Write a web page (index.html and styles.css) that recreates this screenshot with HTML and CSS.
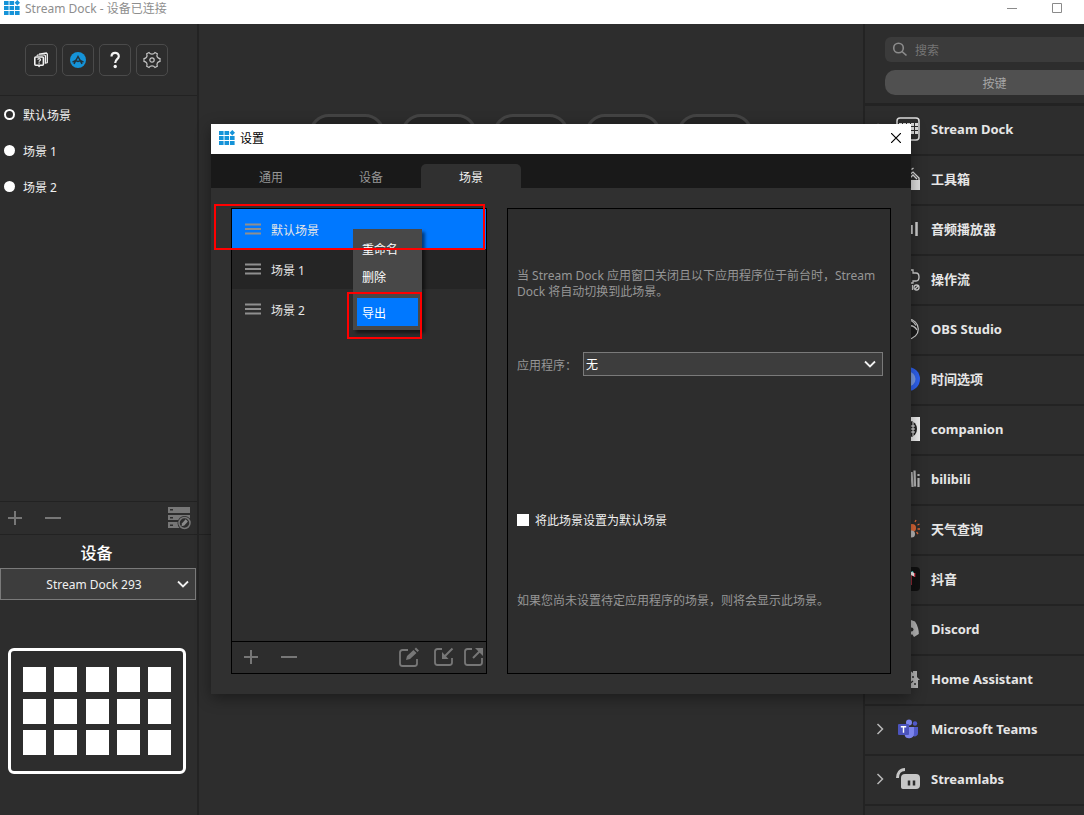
FILE: index.html
```html
<!DOCTYPE html>
<html lang="zh-CN">
<head>
    <meta charset="UTF-8">
    <meta name="viewport" content="width=device-width, initial-scale=1.0">
    <title>Stream Dock</title>
    <link rel="stylesheet" href="styles.css">
</head>
<body>
    <!-- Shared icons -->
    <svg width="0" height="0" class="sprite" aria-hidden="true">
        <symbol id="logo" viewBox="0 0 16 16">
            <path fill="#1593d8" d="M0 1h4.600v4H0zM5.500 1h4.600v4H5.500zM0 6h4.600v4H0zM5.500 6h4.600v4H5.500zM11 6h4.600v4H11zM0 11h4.600v4H0zM5.500 11h4.600v4H5.500zM11 11h4.600v4H11zM13.300 0L16 2.700l-2.700 2.700-2.700-2.700z"/>
        </symbol>
        <symbol id="plus" viewBox="0 0 16 16">
            <path d="M8 1v14M1 8h14" stroke="currentColor" stroke-width="2"/>
        </symbol>
        <symbol id="minus" viewBox="0 0 16 16">
            <path d="M0 8h16" stroke="currentColor" stroke-width="2"/>
        </symbol>
        <symbol id="chevron-down" viewBox="0 0 12 12">
            <path d="M1 3.500l5 5 5-5" fill="none" stroke="#f0f0f0" stroke-width="1.800"/>
        </symbol>
        <symbol id="chevron-right" viewBox="0 0 12 12">
            <path d="M3.500 1l5 5-5 5" fill="none" stroke="#b8b8b8" stroke-width="1.500"/>
        </symbol>
        <symbol id="grip" viewBox="0 0 16 12">
            <path d="M0 1.500h16M0 6h16M0 10.500h16" stroke="#8f8f8f" stroke-width="2"/>
        </symbol>
    </svg>

    <div class="app">
        <header class="titlebar">
            <svg class="logo"><use href="#logo"/></svg>
            <span class="titlebar-text">Stream Dock - 设备已连接</span>
            <button class="win-btn" aria-label="最小化"><svg width="10" height="10"><path d="M0 5.500h10" stroke="#8a8a8a"/></svg></button>
            <button class="win-btn" aria-label="最大化"><svg width="10" height="10"><path d="M.5.500h9v9h-9z" fill="none" stroke="#8a8a8a"/></svg></button>
        </header>

        <div class="main">
            <aside class="sidebar">
                <div class="toolbar">
                    <button aria-label="教程">
                        <svg width="16" height="16" viewBox="0 0 16 16" fill="none" stroke="#f2f2f2">
                            <path d="M6 2.200L13.300 1l1 1v8.500l-1 .8" stroke-width="1.300"/>
                            <path d="M3.800 4l.8-1h7l.8.8v8" stroke-width="1.200"/>
                            <rect x="1.800" y="5" width="8.600" height="8.200" rx="1" stroke-width="1.600" fill="#2d2d2d"/>
                            <path d="M4.800 7.800c0-1.500 2.700-1.500 2.700 0 0 .9-1.400.9-1.400 1.900M6.100 10.500v1.200" stroke-width="1.200"/>
                            <path d="M4.800 14h2.600l-1.300 1.600z" fill="#f2f2f2" stroke="none"/>
                        </svg>
                    </button>
                    <button aria-label="商店">
                        <svg width="16" height="16" viewBox="0 0 16 16">
                            <circle cx="8" cy="8" r="8" fill="#1593d8"/>
                            <path d="M4 12l4-7.500 4 7.500M2.500 10.200l3-1.700 2.500 1 2.500-1 3 1.700" fill="none" stroke="#23323b" stroke-width="1.500"/>
                        </svg>
                    </button>
                    <button aria-label="帮助">
                        <svg width="12" height="18" viewBox="0 0 12 18">
                            <path d="M2.500 5.500C2.500 .8 9.800.8 9.800 5.200c0 3-3.600 3-3.600 6.800" fill="none" stroke="#f4f4f4" stroke-width="2.200"/>
                            <circle cx="6.200" cy="15.500" r="1.700" fill="#f4f4f4"/>
                        </svg>
                    </button>
                    <button aria-label="设置">
                        <svg width="18" height="18" viewBox="0 0 18 18" fill="none" stroke="#c4c4c4" stroke-width="1.200">
                            <path d="M6 1.500q1 1.700 3 1.700t3-1.700l2.300 1.300q-.8 2 .1 3.300t2.600 1.500v2.800q-1.800.2-2.600 1.500t-.1 3.300L12 16.500q-1-1.700-3-1.700t-3 1.700l-2.300-1.300q.8-2-.1-3.300T1 10.400V7.600q1.800-.2 2.600-1.500t.1-3.300z"/>
                            <circle cx="9" cy="9" r="2.200"/>
                        </svg>
                    </button>
                </div>

                <div class="scene-radios">
                    <label><input type="radio" name="scene" checked><span>默认场景</span></label>
                    <label><input type="radio" name="scene"><span>场景 1</span></label>
                    <label><input type="radio" name="scene"><span>场景 2</span></label>
                </div>

                <div class="scene-actions">
                    <button aria-label="添加场景"><svg width="16" height="16"><use href="#plus"/></svg></button>
                    <button aria-label="删除场景"><svg width="16" height="16"><use href="#minus"/></svg></button>
                    <button class="push" aria-label="管理场景">
                        <svg width="24" height="24" viewBox="0 0 24 24">
                            <path fill="#777" d="M1 1h22v6H1zM1 9h22v5H1zM1 16h13v6H1z"/>
                            <path fill="#2d2d2d" d="M3 3h3v1.500H3zM3 11h3v1.500H3zM3 18.500h3V20H3z"/>
                            <circle cx="17.500" cy="17" r="7" fill="#2d2d2d"/>
                            <circle cx="17.500" cy="17" r="5.500" fill="none" stroke="#777" stroke-width="1.500"/>
                            <path d="M14.500 20.200l.6-3 3.600-3.900 2.200 2.200-3.600 3.900z" fill="#8a8a8a"/>
                        </svg>
                    </button>
                </div>

                <section class="device">
                    <h2>设备</h2>
                    <div class="select-box">
                        <select class="device-select" aria-label="设备">
                            <option>Stream Dock 293</option>
                        </select>
                        <svg><use href="#chevron-down"/></svg>
                    </div>
                    <div class="device-preview">
                        <i></i><i></i><i></i><i></i><i></i>
                        <i></i><i></i><i></i><i></i><i></i>
                        <i></i><i></i><i></i><i></i><i></i>
                    </div>
                </section>
            </aside>

            <main class="canvas">
                <div class="keys">
                    <span></span><span></span><span></span><span></span><span></span>
                    <span></span><span></span><span></span><span></span><span></span>
                    <span></span><span></span><span></span><span></span><span></span>
                </div>
                <div class="inspector"></div>
            </main>

            <aside class="plugins">
                <div class="plugins-head">
                    <label class="search">
                        <svg width="16" height="16" viewBox="0 0 16 16" fill="none" stroke="#8c8c8c" stroke-width="1.600">
                            <circle cx="6.500" cy="6" r="4.800"/>
                            <path d="M10 9.500l4.500 4"/>
                        </svg>
                        <input type="text" placeholder="搜索" aria-label="搜索">
                    </label>
                    <button class="key-type">按键</button>
                </div>
                <ul class="plugin-list">
                    <li>
                        <svg class="chev"><use href="#chevron-right"/></svg>
                        <svg class="icon" viewBox="0 0 24 24"><rect x="1" y="1" width="22" height="22" rx="3" fill="none" stroke="#dedede" stroke-width="1.500"/><path fill="#dedede" d="M3 6h3v3H3zM7 6h3v3H7zM11 6h3v3h-3zM15 6h3v3h-3zM19 6h3v3h-3zM3 10h3v3H3zM7 10h3v3H7zM11 10h3v3h-3zM15 10h3v3h-3zM19 10h3v3h-3zM3 14h3v3H3zM7 14h3v3H7zM11 14h3v3h-3zM15 14h3v3h-3zM19 14h3v3h-3z"/></svg>
                        Stream Dock
                    </li>
                    <li>
                        <svg class="chev"><use href="#chevron-right"/></svg>
                        <svg class="icon" viewBox="0 0 24 24"><path d="M0 13h24v10H0z" fill="#dedede"/><path d="M8 12l9-7 6 6v2M13 12l4-4 4 4M15.500 2.500l2-1.500" fill="none" stroke="#dedede" stroke-width="1.300"/></svg>
                        工具箱
                    </li>
                    <li>
                        <svg class="chev"><use href="#chevron-right"/></svg>
                        <svg class="icon" viewBox="0 0 24 24"><path d="M3 9v6M8 5v14M15.500 8v9M20.500 5v14" stroke="#cfcfcf" stroke-width="2.500"/></svg>
                        音频播放器
                    </li>
                    <li>
                        <svg class="chev"><use href="#chevron-right"/></svg>
                        <svg class="icon" viewBox="0 0 24 24" fill="none" stroke="#cfcfcf" stroke-width="1.300"><path d="M3 3h14v3h3q3 0 3 4t-3 4h-3v2h-3M16.500 18v5"/><circle cx="20.500" cy="20.500" r="2.500"/><path d="M19 22l3-3"/></svg>
                        操作流
                    </li>
                    <li>
                        <svg class="chev"><use href="#chevron-right"/></svg>
                        <svg class="icon" viewBox="0 0 24 24"><circle cx="12.500" cy="12" r="9.800" fill="#1c1c1c" stroke="#cfcfcf" stroke-width="1.200"/><path d="M10 10c4-2 8-2 11 3M15 3.500c2 1 4 3 5 5" fill="none" stroke="#cfcfcf" stroke-width="1.300"/></svg>
                        OBS Studio
                    </li>
                    <li>
                        <svg class="chev"><use href="#chevron-right"/></svg>
                        <svg class="icon" viewBox="0 0 24 24"><circle cx="12" cy="12" r="12" fill="#2f62f0"/><circle cx="12" cy="12" r="7.500" fill="#7b9de8"/></svg>
                        时间选项
                    </li>
                    <li>
                        <svg class="chev"><use href="#chevron-right"/></svg>
                        <svg class="icon" viewBox="0 0 24 24"><path fill="#f0f0f0" d="M0 0h24v24H0z"/><ellipse cx="14" cy="12" rx="7" ry="8" fill="#222"/><path d="M7 9h12M7 12h12M7 15h12M12 5v14M17 5v14" stroke="#f0f0f0"/></svg>
                        companion
                    </li>
                    <li>
                        <svg class="chev"><use href="#chevron-right"/></svg>
                        <svg class="icon" viewBox="0 0 24 24"><path d="M4 4v16M9 9v11M15.500 5l1 15M18.500 3.500l.5 16M22.500 11v9M22.500 7v2" stroke="#b5b5b5" stroke-width="2.200"/></svg>
                        bilibili
                    </li>
                    <li>
                        <svg class="chev"><use href="#chevron-right"/></svg>
                        <svg class="icon" viewBox="0 0 24 24"><circle cx="16" cy="11" r="4" fill="#df6837"/><path d="M19 5l1-2M21.500 8l2-1M21.500 12h2.500M20.500 15l1.500 2" stroke="#df6837" stroke-width="1.300"/><circle cx="15.500" cy="17" r="3.500" fill="#bdbdbd"/></svg>
                        天气查询
                    </li>
                    <li>
                        <svg class="chev"><use href="#chevron-right"/></svg>
                        <svg class="icon" viewBox="0 0 24 24"><rect width="24" height="24" rx="4" fill="#101010"/><path d="M15 8v10" stroke="#e8394d" stroke-width="1.200"/><path d="M15 5h2l2 2v3l-4-2z" fill="#f7f7f7"/><path d="M15.500 4.700h1.700" stroke="#4be3e0"/><path d="M18.700 6v4" stroke="#e8394d" stroke-width="1.200"/></svg>
                        抖音
                    </li>
                    <li>
                        <svg class="chev"><use href="#chevron-right"/></svg>
                        <svg class="icon" viewBox="0 0 24 24"><path d="M6 4l3-1 1 2h4l1-2 4 1.500c3 4.500 4 9 3.800 12.500L18 20l-1.500-2.500h-9L6 20l-4.500-3C1 12 3 7 6 4z" fill="#b5b5b5"/><circle cx="15.500" cy="12.500" r="2" fill="#2d2d2d"/><circle cx="8.500" cy="12.500" r="2" fill="#2d2d2d"/></svg>
                        Discord
                    </li>
                    <li>
                        <svg class="chev"><use href="#chevron-right"/></svg>
                        <svg class="icon" viewBox="0 0 24 24"><path d="M1 13L12 2l5 4V4h4v6l3 3h-2v8H3v-8z" fill="#b5b5b5"/><path d="M12 21v-8M12 18l5-4M16 10h2M18 17h2" stroke="#2d2d2d" stroke-width="1.300"/></svg>
                        Home Assistant
                    </li>
                    <li>
                        <svg class="chev"><use href="#chevron-right"/></svg>
                        <svg class="icon" viewBox="0 0 24 24"><circle cx="19" cy="6.500" r="2.200" fill="#5059c9"/><path d="M15 10h7v6c0 3-3 4-5 3z" fill="#5059c9"/><circle cx="13" cy="5.500" r="3" fill="#7b83eb"/><path d="M9 10h9v6.500a4.800 4.800 0 0 1-9.500 1z" fill="#7b83eb"/><rect x="2" y="7" width="11" height="11" rx="1" fill="#4b53bc"/><path d="M4.800 9.800h5.400M7.500 9.800v6" stroke="#fff" stroke-width="1.400"/></svg>
                        Microsoft Teams
                    </li>
                    <li>
                        <svg class="chev"><use href="#chevron-right"/></svg>
                        <svg class="icon" viewBox="0 0 24 24"><path d="M1.500 11C1.500 6 4 2.500 9 2.500" fill="none" stroke="#c6c6c6" stroke-width="3"/><rect x="5" y="7" width="19" height="15" rx="4" fill="#c6c6c6"/><path d="M5 12h6v10H7a2 2 0 0 1-2-2z" fill="#c6c6c6"/><path d="M13 13.500v5M18 13.500v5" stroke="#2d2d2d" stroke-width="2.500"/></svg>
                        Streamlabs
                    </li>
                </ul>
            </aside>
        </div>
    </div>

    <!-- Settings window -->
    <div class="dialog" role="dialog" aria-labelledby="dialogTitle">
        <div class="dialog-title">
            <svg class="logo"><use href="#logo"/></svg>
            <span id="dialogTitle">设置</span>
            <button aria-label="关闭"><svg width="10" height="10"><path d="M0 0l10 10M10 0L0 10" stroke="#000" stroke-width="1.200"/></svg></button>
        </div>
        <div class="tabs">
            <button>通用</button>
            <button>设备</button>
            <button class="active">场景</button>
        </div>
        <div class="dialog-body">
            <div class="scene-panel">
                <ul class="scene-list">
                    <li class="selected"><svg class="grip"><use href="#grip"/></svg><span>默认场景</span></li>
                    <li class="alt"><svg class="grip"><use href="#grip"/></svg><span>场景 1</span></li>
                    <li><svg class="grip"><use href="#grip"/></svg><span>场景 2</span></li>
                </ul>
                <div class="scene-tools">
                    <button aria-label="添加"><svg width="16" height="16"><use href="#plus"/></svg></button>
                    <button aria-label="删除"><svg width="16" height="16"><use href="#minus"/></svg></button>
                    <button class="push" aria-label="编辑">
                        <svg width="20" height="20" viewBox="0 0 20 20"><path d="M9 3H3.500Q1 3 1 5.500v11Q1 19 3.500 19h12q2.500 0 2.500-2.500V12" fill="none" stroke="#777" stroke-width="1.800"/><path d="M7 13l1-4 6.500-6 3 3L11 12zM15.500 2l1.500-1.500 3 3L18.500 5z" fill="#777"/></svg>
                    </button>
                    <button class="import" aria-label="导入">
                        <svg width="20" height="20" viewBox="0 0 20 20"><path d="M8 2H3.500Q1 2 1 4.500v11Q1 18 3.500 18h12q2.500 0 2.500-2.500V11" fill="none" stroke="#777" stroke-width="1.800"/><path d="M18.500 1.500L9 11" stroke="#777" stroke-width="2"/><path d="M8 5l6.500 7H8z" fill="#777"/></svg>
                    </button>
                    <button aria-label="导出">
                        <svg width="20" height="20" viewBox="0 0 20 20"><path d="M8 2H3.500Q1 2 1 4.500v11Q1 18 3.500 18h12q2.500 0 2.500-2.500V11" fill="none" stroke="#777" stroke-width="1.800"/><path d="M9 11l8-8" stroke="#777" stroke-width="2"/><path d="M11 1h8v8z" fill="#777"/></svg>
                    </button>
                </div>
            </div>

            <div class="scene-options">
                <p>当 Stream Dock 应用窗口关闭且以下应用程序位于前台时，Stream Dock 将自动切换到此场景。</p>
                <div class="app-row">
                    <label for="appSelect">应用程序：</label>
                    <div class="select-box">
                        <select id="appSelect" class="app-select">
                            <option>无</option>
                        </select>
                        <svg><use href="#chevron-down"/></svg>
                    </div>
                </div>
                <label class="default-row"><input type="checkbox"><span>将此场景设置为默认场景</span></label>
                <p>如果您尚未设置待定应用程序的场景，则将会显示此场景。</p>
            </div>
        </div>

        <div class="context-menu">
            <button>重命名</button>
            <button>删除</button>
            <hr>
            <button class="active">导出</button>
        </div>
        <div class="mark mark-scene"></div>
        <div class="mark mark-export"></div>
    </div>
</body>
</html>
```

FILE: styles.css
```css
* {
    box-sizing: border-box;
    margin: 0;
    padding: 0;
}

body {
    font-family: "Noto Sans", "Noto Sans CJK SC", sans-serif;
    font-size: 12px;
    line-height: 16px;
    color: #f0f0f0;
    background-color: #2d2d2d;
    overflow: hidden;
}

button, input, select {
    font: inherit;
    color: inherit;
}

button {
    background: none;
    border: none;
    cursor: pointer;
}

svg {
    display: block;
    flex-shrink: 0;
}

ul {
    list-style: none;
}

.sprite {
    position: absolute;
}

.logo {
    width: 16px;
    height: 16px;
}

.app {
    height: 100vh;
    display: flex;
    flex-direction: column;
}

/* Window title bar */
.titlebar {
    display: flex;
    align-items: center;
    height: 24px;
    padding: 0 21px 8px 4px;
    background-color: #fff;
    color: #8e8e8e;
}

.titlebar-text {
    flex: 1;
    margin-left: 5px;
    padding-top: 2px;
}

.win-btn {
    margin-left: 33px;
    padding: 1px;
}

.main {
    flex: 1;
    display: flex;
    min-height: 0;
}

/* Left sidebar */
.sidebar {
    width: 199px;
    display: flex;
    flex-direction: column;
    border-right: 2px solid #232323;
}

.toolbar {
    display: flex;
    gap: 5px;
    padding: 20px 25px 19px;
    border-bottom: 1px solid #222;
}

.toolbar button {
    width: 32px;
    height: 32px;
    display: flex;
    align-items: center;
    justify-content: center;
    border: 1px solid #4a4a4a;
    border-radius: 5px;
}

.scene-radios {
    flex: 1;
}

.scene-radios label {
    display: flex;
    align-items: center;
    gap: 8px;
    height: 36px;
    padding-left: 4px;
}

.scene-radios span,
.scene-list span,
.default-row span,
.app-row label {
    padding-top: 3px;
}

.scene-radios input {
    appearance: none;
    width: 11px;
    height: 11px;
    border-radius: 50%;
    background-color: #fff;
}

.scene-radios input:checked {
    border: 2px solid #fff;
    background-color: transparent;
}

.scene-actions {
    display: flex;
    align-items: center;
    gap: 22px;
    height: 33px;
    padding: 0 6px 0 7px;
    border-top: 1px solid #222;
    color: #777;
}

.push {
    margin-left: auto;
}

.device {
    border-top: 1px solid #222;
    padding-bottom: 41px;
}

.device h2 {
    padding: 3px 4px 0 0;
    font-size: 16px;
    font-weight: 500;
    line-height: 30px;
    text-align: center;
    color: #fff;
}

.select-box {
    position: relative;
}

.select-box select {
    display: block;
    appearance: none;
    width: 100%;
    padding-top: 2px;
    background-color: #3d3d3d;
    border: 1px solid #7a7a7a;
    border-radius: 0;
}

.select-box svg {
    position: absolute;
    top: 50%;
    right: 7px;
    width: 12px;
    height: 12px;
    margin-top: -6px;
    pointer-events: none;
}

.device .select-box {
    margin-right: 1px;
}

.select-box .device-select {
    height: 32px;
    padding-right: 8px;
    text-align: center;
    text-align-last: center;
}

.device-preview {
    display: grid;
    grid-template-columns: repeat(5, 23px);
    grid-auto-rows: 25px;
    justify-content: space-between;
    align-content: space-between;
    height: 126px;
    margin: 48px 11px 0 8px;
    padding: 16px 12px;
    border: 3px solid #fff;
    border-radius: 6px;
}

.device-preview i {
    background-color: #fff;
}

/* Key canvas */
.canvas {
    flex: 1;
    min-width: 0;
    display: flex;
    flex-direction: column;
}

.keys {
    flex: 1;
    display: grid;
    grid-template-columns: repeat(5, 76px);
    grid-auto-rows: 76px;
    gap: 16px;
    justify-content: center;
    padding-top: 90px;
}

.keys span {
    border: 3px solid #444;
    border-radius: 20px;
    background-color: #252525;
}

.inspector {
    height: 281px;
    border-top: 1px solid #222;
}

/* Plugin list */
.plugins {
    width: 221px;
    border-left: 2px solid #232323;
    overflow: hidden;
}

.plugins-head {
    padding: 13px 0 8px 20px;
    border-bottom: 3px solid #232323;
}

.search {
    display: flex;
    align-items: center;
    gap: 7px;
    height: 25px;
    margin-right: -20px;
    padding-left: 7px;
    border-radius: 6px;
    background-color: #3b3b3b;
}

.search input {
    flex: 1;
    min-width: 0;
    padding-top: 2px;
    border: none;
    outline: none;
    background: none;
}

.search input::placeholder {
    color: #757575;
    opacity: 1;
}

.key-type {
    display: block;
    width: 219px;
    height: 25px;
    margin-top: 8px;
    padding-top: 2px;
    border-radius: 10px;
    background-color: #505050;
    color: #a6a6a6;
}

.plugin-list li {
    display: flex;
    align-items: center;
    height: 50px;
    padding: 0 0 2px 9px;
    border-bottom: 2px solid #232323;
    font-size: 13px;
    font-weight: bold;
    white-space: nowrap;
    color: #e6e6e6;
}

.plugin-list .chev {
    width: 12px;
    height: 12px;
    margin-right: 10px;
}

.plugin-list .icon {
    width: 24px;
    height: 24px;
    margin-right: 11px;
}

/* Settings dialog */
.dialog {
    position: absolute;
    top: 124px;
    left: 211px;
    width: 700px;
    height: 570px;
    display: flex;
    flex-direction: column;
    background-color: #303030;
    box-shadow: 0 4px 14px rgba(0, 0, 0, 0.4);
}

.dialog-title {
    display: flex;
    align-items: center;
    gap: 5px;
    height: 30px;
    padding: 0 9px 2px 8px;
    background-color: #fff;
    color: #000;
}

.dialog-title span {
    padding-top: 2px;
}

.dialog-title button {
    margin-left: auto;
    padding: 1px;
}

.tabs {
    display: flex;
    align-items: flex-end;
    height: 34px;
    padding-left: 10px;
    background-color: #191919;
}

.tabs button {
    width: 100px;
    height: 24px;
    padding-top: 4px;
    color: #969696;
}

.tabs .active {
    border-radius: 5px 5px 0 0;
    background-color: #303030;
    color: #f0f0f0;
}

.dialog-body {
    flex: 1;
    display: flex;
    gap: 20px;
    padding: 20px;
}

.scene-panel {
    width: 256px;
    display: flex;
    flex-direction: column;
    border: 1px solid #000;
    background-color: #2d2d2d;
}

.scene-list {
    flex: 1;
}

.scene-list li {
    display: flex;
    align-items: center;
    gap: 10px;
    height: 40px;
    padding-left: 13px;
    color: #e6e6e6;
}

.scene-list .alt {
    background-color: #252525;
}

.scene-list .selected {
    background-color: #0078ff;
}

.grip {
    width: 16px;
    height: 12px;
}

.scene-tools {
    display: flex;
    align-items: center;
    height: 32px;
    padding: 0 2px 2px 11px;
    border-top: 1px solid #000;
    color: #777;
}

.scene-tools button + button {
    margin-left: 22px;
}

.scene-tools button.push {
    margin-left: auto;
}

.scene-tools button.import {
    margin-left: 15px;
}

.scene-tools button.import + button {
    margin-left: 10px;
}

.scene-options {
    flex: 1;
    padding: 59px 7px 0 9px;
    border: 1px solid #000;
    background-color: #2d2d2d;
    color: #969696;
}

.app-row {
    display: flex;
    align-items: center;
    gap: 6px;
    margin: 52px 0 134px;
}

.app-row .select-box {
    flex: 1;
}

.select-box .app-select {
    height: 24px;
    padding-left: 2px;
    color: #fff;
}

.default-row {
    display: flex;
    align-items: center;
    gap: 6px;
    margin-bottom: 64px;
    color: #f0f0f0;
}

.default-row input {
    appearance: none;
    width: 12px;
    height: 12px;
    background-color: #fff;
}

.default-row input:checked {
    border: 3px solid #fff;
    background-color: #0078ff;
}

/* Scene context menu */
.context-menu {
    position: absolute;
    top: 105px;
    left: 142px;
    width: 69px;
    padding: 5px 4px 4px;
    background-color: #484848;
    box-shadow: 3px 3px 3px rgba(0, 0, 0, 0.5);
}

.context-menu button {
    display: block;
    width: 61px;
    height: 28px;
    padding: 3px 0 0 5px;
    text-align: left;
    color: #fff;
}

.context-menu .active {
    background-color: #0078ff;
}

.context-menu hr {
    margin: 2px 0 5px;
    border: none;
    border-top: 1px solid #3a3a3a;
}

/* Red highlight frames */
.mark {
    position: absolute;
    border: 2px solid #f00;
    pointer-events: none;
}

.mark-scene {
    top: 80px;
    left: 3px;
    width: 271px;
    height: 46px;
}

.mark-export {
    top: 168px;
    left: 136px;
    width: 75px;
    height: 47px;
}
```
